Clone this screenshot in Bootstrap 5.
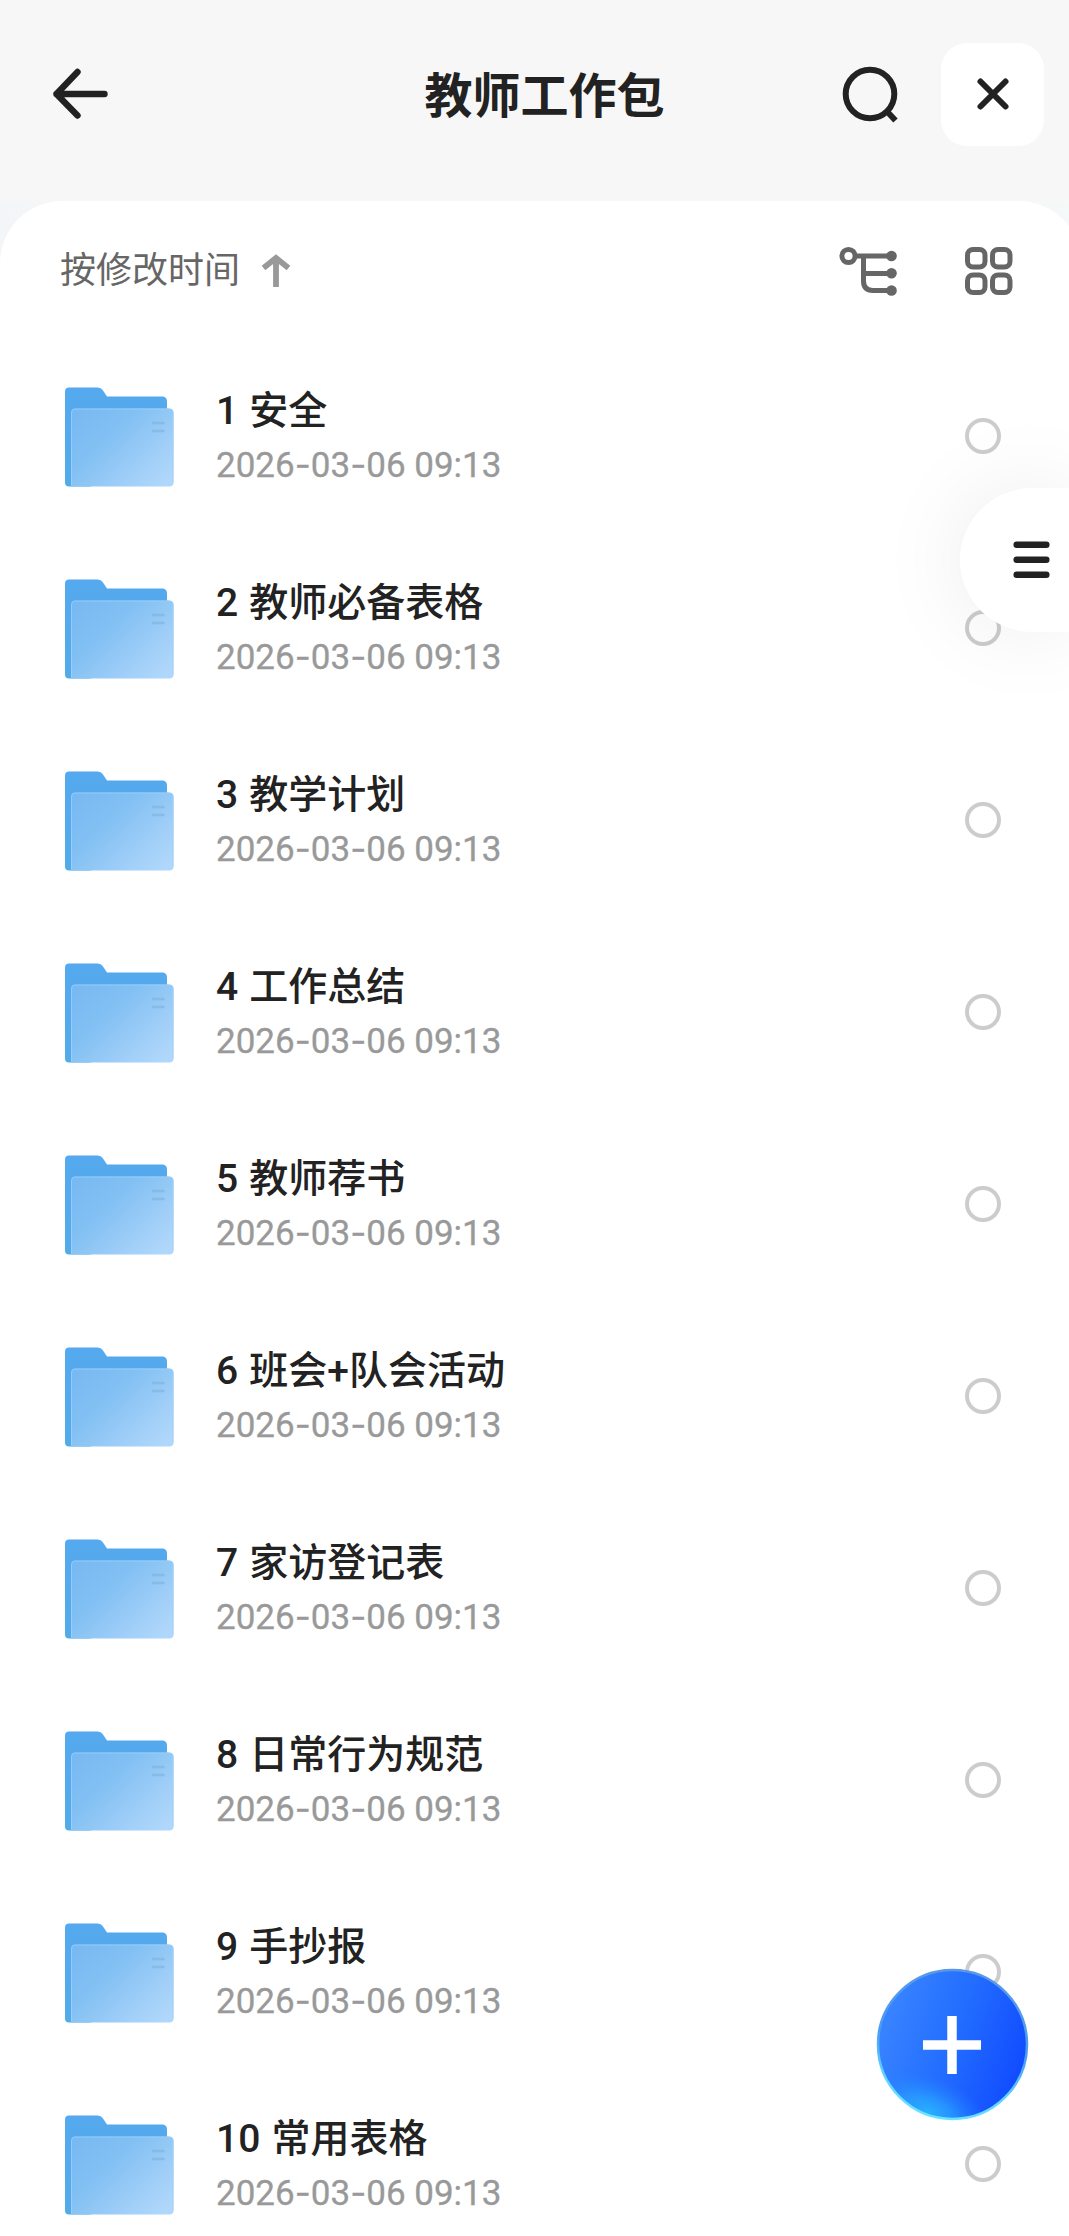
<!DOCTYPE html>
<html lang="zh-CN">
<head>
<meta charset="utf-8">
<meta name="viewport" content="width=device-width, initial-scale=1">
<title>教师工作包</title>
<link href="https://cdn.jsdelivr.net/npm/bootstrap@5.3.0/dist/css/bootstrap.min.css" rel="stylesheet">
<style>
  body { background: #f7f7f7; color: #222; font-family: Roboto, "Noto Sans CJK SC", sans-serif; }
  .app-screen { height: 2236px; overflow: hidden; }
  .top-bar { height: 201px; padding: 0 25px 13px 48px; }
  .bar-side { flex: 1 1 0; }
  .page-title { font-size: 48px; line-height: 72px; font-weight: 700; padding-top: 6px; margin-right: 3px; }
  .close-box { width: 103px; height: 103px; border-radius: 26px; margin-left: 39px; }
  .sheet { height: 2035px; margin-right: -12px; padding-right: 12px; border-radius: 62px 62px 0 0; }
  .sheet-wrap { background: linear-gradient(90deg, #f3f5f8, #f7f7f7 80px, #f7f7f7 1010px, #f6f9f9); }
  .sort-bar { height: 139px; padding: 0 52px 0 60px; }
  .sort-text { font-size: 36px; line-height: 54px; color: #666; }
  .sort-arrow { margin-left: 12px; }
  .view-grid { margin-left: 57px; }
  .file-row { height: 192px; padding: 0 68px 0 61px; }
  .file-label { padding: 3px 0 0 39px; }
  .file-name { font-size: 39px; line-height: 54px; font-weight: 500; word-spacing: 1.5px; }
  .file-date { font-size: 35px; line-height: 52px; color: #999; -webkit-text-stroke: .3px #999; }
  .file-date i { font-family: Inter, sans-serif; font-style: normal; }
  .pick-ring { width: 36px; height: 36px; border: 4px solid #ccc; }
  .side-tab { top: 488px; width: 109px; height: 144px; border-radius: 72px 0 0 72px; box-shadow: 0 0 90px rgba(0,0,0,.08); padding-left: 53px; }
  .add-btn { left: 876px; top: 1968px; width: 153px; height: 153px; }
  svg { display: block; flex: none; }
</style>
<script src="https://cdn.jsdelivr.net/npm/bootstrap@5.3.0/dist/js/bootstrap.bundle.min.js"></script>
</head>
<body>
<svg width="0" height="0" class="position-absolute" aria-hidden="true">
  <defs>
    <linearGradient id="folderBack" x1="0" y1="0" x2="0" y2="1"><stop offset="0" stop-color="#55a9ee"/><stop offset="1" stop-color="#51abe9"/></linearGradient>
    <linearGradient id="folderFront" x1="0" y1="0.1" x2="1" y2="0.9"><stop offset="0" stop-color="#78b9f2"/><stop offset=".35" stop-color="#82c0f3"/><stop offset=".75" stop-color="#a1cff8"/><stop offset="1" stop-color="#b1d8fb"/></linearGradient>
    <linearGradient id="folderEdge" x1="0" y1="0" x2="1" y2="1"><stop offset="0" stop-color="#8ecbfa"/><stop offset="1" stop-color="#a9d0f4"/></linearGradient>
    <symbol id="folder" viewBox="0 0 116 104">
      <path d="M4 7.500Q4 3.500 8 3.500H36Q40 3.500 42 6.500L46 12.500H101Q106 12.500 106 17.500V60H30V102.500H8Q4 102.500 4 98.500Z" fill="url(#folderBack)"/>
      <path d="M10 28.500Q10 24.500 14 24.500H108Q112.500 24.500 112.500 28.500V98.500Q112.500 102.500 108.500 102.500H10Z" fill="url(#folderFront)"/>
      <path d="M10.500 101.500V28.500Q10.500 25 14 25H108Q112 25 112 28.500V98.500" fill="none" stroke="url(#folderEdge)" stroke-width="1"/>
      <path d="M91 39H103.500M91 47H103.500" stroke="#7db3df" stroke-width="2.500" opacity=".6"/>
    </symbol>
  </defs>
</svg>
<main class="app-screen position-relative">
  <header class="top-bar d-flex align-items-center">
    <div class="bar-side">
      <svg width="64" height="60" viewBox="0 0 64 60" fill="none" stroke="#222" stroke-width="6.400" stroke-linecap="round" stroke-linejoin="round"><path d="M29.500 8 8.500 30 29.500 51.500M8.500 30H56.500"/></svg>
    </div>
    <h1 class="page-title mb-0">教师工作包</h1>
    <div class="bar-side d-flex align-items-center justify-content-end">
      <svg width="64" height="64" viewBox="0 0 64 64" fill="none" stroke="#222" stroke-width="6"><circle cx="32" cy="32" r="24.300"/><path d="M49.500 50 57.500 58.500"/></svg>
      <div class="close-box bg-white d-flex align-items-center justify-content-center">
        <svg width="34" height="34" viewBox="0 0 34 34" stroke="#222" stroke-width="6" stroke-linecap="round"><path d="M4.500 4.500 29.500 29.500M29.500 4.500 4.500 29.500"/></svg>
      </div>
    </div>
  </header>
  <div class="sheet-wrap">
    <section class="sheet bg-white">
      <div class="sort-bar d-flex align-items-center">
        <span class="sort-text">按修改时间</span>
        <svg class="sort-arrow" width="46" height="40" viewBox="0 0 46 40" fill="none" stroke="#999" stroke-width="5.800"><path d="M24 36V7M11.500 17 24 7 36.500 17"/></svg>
        <svg class="ms-auto" width="64" height="60" viewBox="0 0 64 60" fill="none" stroke="#666" stroke-width="5"><circle cx="12.500" cy="15" r="6.600"/><path d="M20 15H55M27.500 15V40Q27.500 49.500 37 49.500H55M27.500 32.500H55"/><g fill="#666" stroke="none"><circle cx="55.500" cy="15" r="5.300"/><circle cx="55.500" cy="32.300" r="5.300"/><circle cx="55.500" cy="49.500" r="5.300"/></g></svg>
        <svg class="view-grid me-n1" width="60" height="60" viewBox="0 0 60 60" fill="none" stroke="#666" stroke-width="5"><rect x="10.500" y="8.500" width="17.500" height="17.500" rx="5.500"/><rect x="35.500" y="8.500" width="17.500" height="17.500" rx="5.500"/><rect x="10.500" y="34" width="17.500" height="17.500" rx="5.500"/><rect x="35.500" y="34" width="17.500" height="17.500" rx="5.500"/></svg>
      </div>
      <div class="file-list">
        <div class="file-row d-flex align-items-center"><svg width="116" height="104"><use href="#folder"/></svg><div class="file-label flex-grow-1"><div class="file-name">1 安全</div><div class="file-date">2026<i>-</i>03<i>-</i>06 09:13</div></div><span class="pick-ring rounded-circle"></span></div>
        <div class="file-row d-flex align-items-center"><svg width="116" height="104"><use href="#folder"/></svg><div class="file-label flex-grow-1"><div class="file-name">2 教师必备表格</div><div class="file-date">2026<i>-</i>03<i>-</i>06 09:13</div></div><span class="pick-ring rounded-circle"></span></div>
        <div class="file-row d-flex align-items-center"><svg width="116" height="104"><use href="#folder"/></svg><div class="file-label flex-grow-1"><div class="file-name">3 教学计划</div><div class="file-date">2026<i>-</i>03<i>-</i>06 09:13</div></div><span class="pick-ring rounded-circle"></span></div>
        <div class="file-row d-flex align-items-center"><svg width="116" height="104"><use href="#folder"/></svg><div class="file-label flex-grow-1"><div class="file-name">4 工作总结</div><div class="file-date">2026<i>-</i>03<i>-</i>06 09:13</div></div><span class="pick-ring rounded-circle"></span></div>
        <div class="file-row d-flex align-items-center"><svg width="116" height="104"><use href="#folder"/></svg><div class="file-label flex-grow-1"><div class="file-name">5 教师荐书</div><div class="file-date">2026<i>-</i>03<i>-</i>06 09:13</div></div><span class="pick-ring rounded-circle"></span></div>
        <div class="file-row d-flex align-items-center"><svg width="116" height="104"><use href="#folder"/></svg><div class="file-label flex-grow-1"><div class="file-name">6 班会+队会活动</div><div class="file-date">2026<i>-</i>03<i>-</i>06 09:13</div></div><span class="pick-ring rounded-circle"></span></div>
        <div class="file-row d-flex align-items-center"><svg width="116" height="104"><use href="#folder"/></svg><div class="file-label flex-grow-1"><div class="file-name">7 家访登记表</div><div class="file-date">2026<i>-</i>03<i>-</i>06 09:13</div></div><span class="pick-ring rounded-circle"></span></div>
        <div class="file-row d-flex align-items-center"><svg width="116" height="104"><use href="#folder"/></svg><div class="file-label flex-grow-1"><div class="file-name">8 日常行为规范</div><div class="file-date">2026<i>-</i>03<i>-</i>06 09:13</div></div><span class="pick-ring rounded-circle"></span></div>
        <div class="file-row d-flex align-items-center"><svg width="116" height="104"><use href="#folder"/></svg><div class="file-label flex-grow-1"><div class="file-name">9 手抄报</div><div class="file-date">2026<i>-</i>03<i>-</i>06 09:13</div></div><span class="pick-ring rounded-circle"></span></div>
        <div class="file-row d-flex align-items-center"><svg width="116" height="104"><use href="#folder"/></svg><div class="file-label flex-grow-1"><div class="file-name">10 常用表格</div><div class="file-date">2026<i>-</i>03<i>-</i>06 09:13</div></div><span class="pick-ring rounded-circle"></span></div>
      </div>
    </section>
  </div>

  <div class="side-tab position-absolute end-0 bg-white d-flex align-items-center">
    <svg width="38" height="40" viewBox="0 0 38 40" stroke="#222" stroke-width="6.500" stroke-linecap="round"><path d="M3.700 4.700H33.300M3.700 19.700H33.300M3.700 34.700H33.300"/></svg>
  </div>

  <svg class="add-btn position-absolute" viewBox="0 0 153 153">
    <defs>
      <linearGradient id="addBase" x1="0" y1=".3" x2="1" y2=".65"><stop offset="0" stop-color="#3a86ff"/><stop offset=".5" stop-color="#236dff"/><stop offset="1" stop-color="#104aff"/></linearGradient>
      <radialGradient id="addGlow" gradientUnits="userSpaceOnUse" cx="0" cy="0" r="1" gradientTransform="translate(52 144) rotate(22) scale(66 36)"><stop offset="0" stop-color="#29b0ff"/><stop offset=".4" stop-color="#28a0ff" stop-opacity=".75"/><stop offset="1" stop-color="#2480ff" stop-opacity="0"/></radialGradient>
      <linearGradient id="addRim" x1=".6" y1="0" x2=".4" y2="1"><stop offset="0" stop-color="#5b98e6"/><stop offset=".5" stop-color="#4b9cf5"/><stop offset=".75" stop-color="#5ccfff"/><stop offset="1" stop-color="#6be4ff"/></linearGradient>
    </defs>
    <circle cx="76.500" cy="76.500" r="75" fill="url(#addBase)"/>
    <circle cx="76.500" cy="76.500" r="75" fill="url(#addGlow)"/>
    <circle cx="76.500" cy="76.500" r="74.500" fill="none" stroke="url(#addRim)" stroke-width="2.500"/>
    <path d="M76 48V106M47 77H105" stroke="#fff" stroke-width="9.500"/>
  </svg>
</main>
</body>
</html>
